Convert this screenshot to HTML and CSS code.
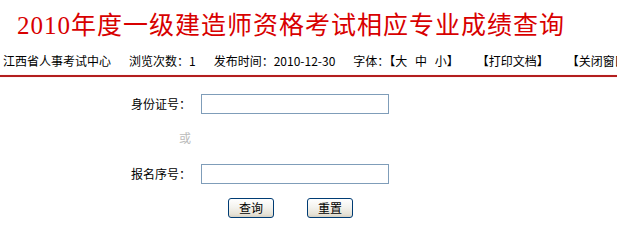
FILE: index.html
```html
<!DOCTYPE html>
<html lang="zh-CN">
<head>
<meta charset="utf-8">
<title>2010年度一级建造师资格考试相应专业成绩查询</title>
<link rel="stylesheet" href="styles.css">
</head>
<body>
<div class="title">2010年度一级建造师资格考试相应专业成绩查询</div>
<div class="info">
  <span>江西省人事考试中心</span>
  <span>浏览次数：1</span>
  <span>发布时间：2010-12-30</span>
  <span class="sizes">字体：【大 中 小】</span>
  <span>【打印文档】</span>
  <span>【关闭窗口】</span>
</div>
<div class="rule"></div>
<form class="form">
  <div class="row">
    <label class="label">身份证号：</label>
    <input class="field" type="text">
  </div>
  <div class="row or-row">
    <span class="label or">或</span>
  </div>
  <div class="row">
    <label class="label">报名序号：</label>
    <input class="field" type="text">
  </div>
  <div class="buttons">
    <button type="button" class="btn">查询</button>
    <button type="button" class="btn">重置</button>
  </div>
</form>
</body>
</html>
```
FILE: styles.css
```css
html, body {
  margin: 0;
  padding: 0;
  background: #fff;
}
body {
  font-family: "Liberation Serif", "Noto Sans CJK SC", serif;
  color: #000;
  overflow: hidden;
}
.title {
  padding: 10px 0 0 17px;
  height: 31px;
  line-height: 31px;
  font-size: 25px;
  letter-spacing: 1px;
  color: #d80000;
  white-space: nowrap;
}
.info {
  display: flex;
  gap: 18px;
  padding: 0 0 0 3px;
  margin-top: 10px;
  height: 20px;
  line-height: 20px;
  font-family: "Noto Sans CJK SC", sans-serif;
  font-size: 12px;
  white-space: nowrap;
  overflow: hidden;
}
.info span { flex: none; }
.info .sizes { word-spacing: 5px; }
.rule {
  margin-top: 4px;
  height: 2px;
  background: #b31e1e;
  box-shadow: 0 0 1px #f0a0a0;
}
.form {
  margin: 17px 0 0 0;
  font-family: "Noto Sans CJK SC", sans-serif;
  font-size: 12px;
}
.row {
  display: flex;
  align-items: center;
  height: 20px;
}
.label {
  width: 191px;
  margin-right: 10px;
  text-align: right;
  line-height: 20px;
  flex: none;
}
.or-row {
  height: 50px;
  align-items: flex-start;
}
.or {
  color: #bbbbbb;
  padding-top: 12px;
  line-height: 24px;
}
.field {
  box-sizing: border-box;
  width: 188px;
  height: 20px;
  margin: 0;
  border: 1px solid #7f9db9;
  padding: 0 2px;
  background: #fff;
  font-size: 12px;
}
.buttons {
  display: flex;
  gap: 33px;
  margin: 14px 0 0 228px;
}
.btn {
  box-sizing: border-box;
  width: 46px;
  height: 20px;
  padding: 0;
  border: 1px solid #003c74;
  border-radius: 3px;
  background: linear-gradient(#ffffff, #f4f3ee 45%, #e6e2d6 85%, #d6d0c2);
  font-family: "Noto Sans CJK SC", sans-serif;
  font-size: 12px;
  line-height: 18px;
  color: #000;
}
```
